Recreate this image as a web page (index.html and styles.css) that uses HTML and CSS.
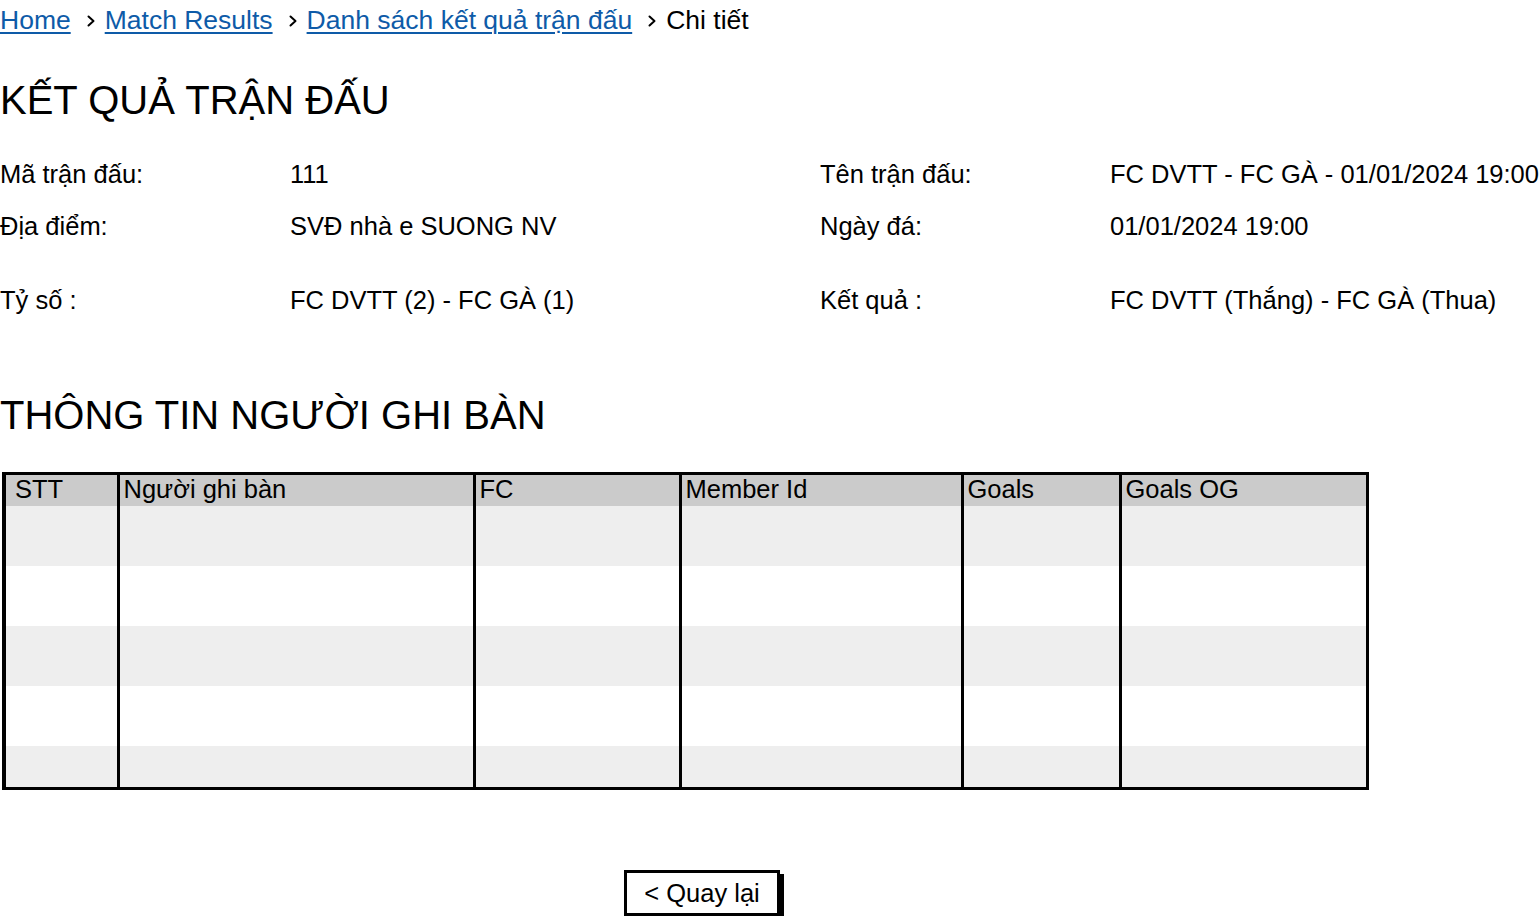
FILE: index.html
```html
<!DOCTYPE html>
<html lang="vi">
<head>
<meta charset="utf-8">
<title>Kết quả trận đấu</title>
<link rel="stylesheet" href="styles.css">
</head>
<body>
<nav class="crumbs">
  <a class="crumb-link" href="#">Home</a>
  <svg class="chev" viewBox="0 0 8 12" width="8" height="12"><polyline points="1.5,1.5 6.5,6 1.5,10.5" fill="none" stroke="#000" stroke-width="2" stroke-linecap="round" stroke-linejoin="round"/></svg>
  <a class="crumb-link" href="#">Match Results</a>
  <svg class="chev" viewBox="0 0 8 12" width="8" height="12"><polyline points="1.5,1.5 6.5,6 1.5,10.5" fill="none" stroke="#000" stroke-width="2" stroke-linecap="round" stroke-linejoin="round"/></svg>
  <a class="crumb-link" href="#">Danh sách kết quả trận đấu</a>
  <svg class="chev" viewBox="0 0 8 12" width="8" height="12"><polyline points="1.5,1.5 6.5,6 1.5,10.5" fill="none" stroke="#000" stroke-width="2" stroke-linecap="round" stroke-linejoin="round"/></svg>
  <span class="crumb-current">Chi tiết</span>
</nav>

<h1 class="page-title">KẾT QUẢ TRẬN ĐẤU</h1>

<div class="info">
  <div class="label">Mã trận đấu:</div>
  <div class="value">111</div>
  <div class="label">Tên trận đấu:</div>
  <div class="value">FC DVTT - FC GÀ - 01/01/2024 19:00</div>

  <div class="label">Địa điểm:</div>
  <div class="value">SVĐ nhà e SUONG NV</div>
  <div class="label">Ngày đá:</div>
  <div class="value">01/01/2024 19:00</div>

  <div class="label">Tỷ số :</div>
  <div class="value">FC DVTT (2) - FC GÀ (1)</div>
  <div class="label">Kết quả :</div>
  <div class="value">FC DVTT (Thắng) - FC GÀ (Thua)</div>
</div>

<h2 class="section-title">THÔNG TIN NGƯỜI GHI BÀN</h2>

<table class="scorers">
  <colgroup>
    <col class="c1"><col class="c2"><col class="c3"><col class="c4"><col class="c5"><col class="c6">
  </colgroup>
  <thead>
    <tr><th class="first">STT</th><th>Người ghi bàn</th><th>FC</th><th>Member Id</th><th>Goals</th><th>Goals OG</th></tr>
  </thead>
  <tbody>
    <tr class="odd"><td></td><td></td><td></td><td></td><td></td><td></td></tr>
    <tr class="even"><td></td><td></td><td></td><td></td><td></td><td></td></tr>
    <tr class="odd"><td></td><td></td><td></td><td></td><td></td><td></td></tr>
    <tr class="even"><td></td><td></td><td></td><td></td><td></td><td></td></tr>
    <tr class="odd last"><td></td><td></td><td></td><td></td><td></td><td></td></tr>
  </tbody>
</table>

<div class="actions">
  <button class="back-btn" type="button">&lt; Quay lại</button>
</div>
</body>
</html>
```

FILE: styles.css
```css
* { box-sizing: border-box; }

body {
  margin: 0;
  font-family: "Liberation Sans", Arial, sans-serif;
  color: #000;
  background: #fff;
}

.crumbs {
  display: flex;
  align-items: center;
  height: 40px;
  font-size: 26.5px;
  line-height: 40px;
  white-space: nowrap;
}

.crumb-link {
  color: #0e5ba8;
  text-decoration: underline;
  text-decoration-thickness: 2px;
  text-underline-offset: 3px;
}

.chev {
  margin: 2px 10px 0 16px;
  flex: none;
}

.crumb-current { color: #000; }

.page-title {
  margin: 36px 0 0 0;
  font-size: 40px;
  line-height: 48px;
  font-weight: normal;
  white-space: nowrap;
}

.info {
  display: grid;
  grid-template-columns: 290px 530px 290px 1fr;
  grid-template-rows: 52px 74px 52px;
  align-items: start;
  margin-top: 24px;
  font-size: 25.5px;
  line-height: 52px;
  white-space: nowrap;
}

.section-title {
  margin: 65px 0 0 0;
  font-size: 40px;
  line-height: 48px;
  font-weight: normal;
  white-space: nowrap;
}

.scorers {
  margin: 33px 0 0 2px;
  width: 1367px;
  table-layout: fixed;
  border-collapse: collapse;
  border: 3px solid #000;
  border-left-width: 4px;
  font-size: 25.5px;
}

.c1 { width: 114px; }
.c2 { width: 356px; }
.c3 { width: 206px; }
.c4 { width: 282px; }
.c5 { width: 158px; }
.c6 { width: auto; }

.scorers th {
  height: 32px;
  padding: 0 0 0 4px;
  background: #cbcbcb;
  font-weight: normal;
  text-align: left;
  line-height: 28px;
  vertical-align: top;
  border-left: 3px solid #000;
  white-space: nowrap;
}

.scorers th.first {
  padding-left: 9px;
  border-left: 4px solid #000;
}

.scorers td {
  height: 60px;
  padding: 0;
  border-left: 3px solid #000;
}

.scorers td:first-child { border-left: 4px solid #000; }

.scorers tr.odd td { background: #eeeeee; }
.scorers tr.even td { background: #ffffff; }
.scorers tr.last td { height: 43px; }

.actions {
  margin-top: 80px;
  padding-left: 624px;
}

.back-btn {
  width: 156px;
  height: 46px;
  padding: 0;
  border: 3px solid #000;
  background: #fff;
  box-shadow: 4px 4px 0 #000;
  font-family: "Liberation Sans", Arial, sans-serif;
  font-size: 25.5px;
  color: #000;
  line-height: 38px;
  cursor: pointer;
}
```
